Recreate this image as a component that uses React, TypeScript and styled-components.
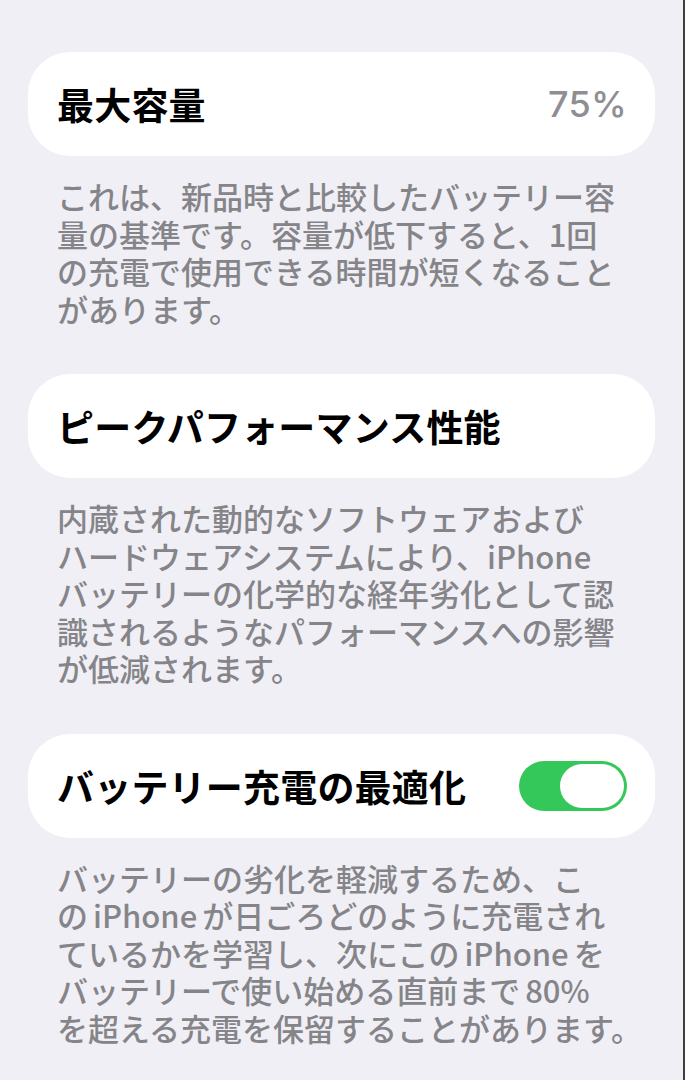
import React from 'react'
import styled, { createGlobalStyle } from 'styled-components'

const GlobalStyle = createGlobalStyle`
  html, body {
    margin: 0;
    padding: 0;
    background: #f0eff5;
  }
  body {
    font-family: 'Noto Sans CJK JP', 'Noto Sans', sans-serif;
    -webkit-font-smoothing: antialiased;
  }
`

const Page = styled.div`
  box-sizing: border-box;
  width: 685px;
  min-height: 1080px;
  padding: 52px 0 0 28px;
  background: #f0eff5;
  border-right: 2px solid #3d3d40;
`

const Group = styled.section`
  width: 627px;
`

const Card = styled.div`
  box-sizing: border-box;
  height: 104px;
  display: flex;
  align-items: center;
  justify-content: space-between;
  padding: 0 28px 0 29px;
  background: #ffffff;
  border-radius: 42px;
`

const Title = styled.div`
  font-size: 37px;
  font-weight: 700;
  color: #000000;
  letter-spacing: 0.2px;
  white-space: nowrap;
`

const Value = styled.div`
  font-family: Inter, 'Noto Sans', sans-serif;
  font-size: 36px;
  font-weight: 500;
  color: #8e8e93;
  letter-spacing: 0.3px;
`

const Footer = styled.div`
  margin: 21px 0 47px;
  padding-left: 29px;
  font-size: 31px;
  line-height: 37.5px;
  font-weight: 500;
  color: #858589;
`

const Line = styled.span`
  display: block;
  white-space: nowrap;
`

// latin words inside Japanese text get a little breathing room
const Latin = styled.span<{ $before?: boolean; $after?: boolean }>`
  margin-left: ${(p) => (p.$before ? '5px' : '0')};
  margin-right: ${(p) => (p.$after ? '5px' : '0')};
`

const Track = styled.div<{ $on: boolean }>`
  box-sizing: border-box;
  width: 108px;
  height: 50px;
  padding: 3px;
  border-radius: 25px;
  background: ${(p) => (p.$on ? '#34c759' : '#e3e3e8')};
  display: flex;
  justify-content: ${(p) => (p.$on ? 'flex-end' : 'flex-start')};
  flex-shrink: 0;
`

const Knob = styled.div`
  width: 64px;
  height: 44px;
  border-radius: 22px;
  background: #ffffff;
`

function Toggle({ on }: { on: boolean }) {
  return (
    <Track $on={on} role="switch" aria-checked={on}>
      <Knob />
    </Track>
  )
}

interface RowProps {
  title: string
  value?: string
  toggle?: boolean
  lines: React.ReactNode[]
}

function SettingGroup({ title, value, toggle, lines }: RowProps) {
  return (
    <Group>
      <Card>
        <Title>{title}</Title>
        {value && <Value>{value}</Value>}
        {toggle !== undefined && <Toggle on={toggle} />}
      </Card>
      <Footer>
        {lines.map((line, i) => (
          <Line key={i}>{line}</Line>
        ))}
      </Footer>
    </Group>
  )
}

const groups: RowProps[] = [
  {
    title: '最大容量',
    value: '75%',
    lines: [
      'これは、新品時と比較したバッテリー容',
      '量の基準です。容量が低下すると、1回',
      'の充電で使用できる時間が短くなること',
      'があります。',
    ],
  },
  {
    title: 'ピークパフォーマンス性能',
    lines: [
      '内蔵された動的なソフトウェアおよび',
      'ハードウェアシステムにより、iPhone',
      'バッテリーの化学的な経年劣化として認',
      '識されるようなパフォーマンスへの影響',
      'が低減されます。',
    ],
  },
  {
    title: 'バッテリー充電の最適化',
    toggle: true,
    lines: [
      'バッテリーの劣化を軽減するため、こ',
      <>
        の<Latin $before $after>iPhone</Latin>が日ごろどのように充電され
      </>,
      <>
        ているかを学習し、次にこの<Latin $before $after>iPhone</Latin>を
      </>,
      <>
        バッテリーで使い始める直前まで<Latin $before>80%</Latin>
      </>,
      'を超える充電を保留することがあります。',
    ],
  },
]

export default function App() {
  return (
    <>
      <GlobalStyle />
      <Page>
        {groups.map((g) => (
          <SettingGroup key={g.title} {...g} />
        ))}
      </Page>
    </>
  )
}
